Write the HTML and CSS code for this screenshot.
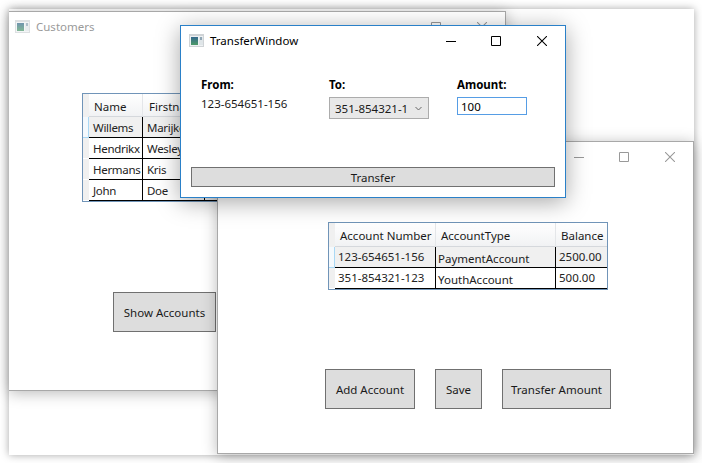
FILE: index.html
```html
<!DOCTYPE html>
<html lang="en">
<head>
  <meta charset="UTF-8" />
  <title>Customers and accounts</title>
  <link rel="stylesheet" href="styles.css">
</head>
<body>
  <svg class="defs" width="0" height="0">
    <defs>
      <linearGradient id="pane" x1="0" y1="0" x2="0" y2="1">
        <stop offset="0" stop-color="#35688c"/>
        <stop offset="1" stop-color="#4c9a68"/>
      </linearGradient>
      <symbol id="app" viewBox="0 0 15 13">
        <rect x="0" y="0" width="15" height="13" fill="#cfd3d6"/>
        <rect x="1" y="2" width="13" height="10" fill="#eef1f3"/>
        <rect x="2" y="3" width="7" height="8" fill="url(#pane)"/>
        <rect x="10" y="3" width="4" height="8" fill="#dfe5e8"/>
        <rect x="11" y="3" width="2" height="3" fill="#8fa5b4"/>
      </symbol>
      <symbol id="min" viewBox="0 0 10 10"><path d="M0 5.5H10" stroke="currentColor" fill="none"/></symbol>
      <symbol id="max" viewBox="0 0 10 10"><path d="M.5.5H9.5V9.5H.5Z" stroke="currentColor" fill="none"/></symbol>
      <symbol id="close" viewBox="0 0 10 10"><path d="M0 0L10 10M10 0L0 10" stroke="currentColor" stroke-width="1.05" fill="none"/></symbol>
    </defs>
  </svg>

  <div class="desktop">
    <div class="win customers">
      <div class="titlebar">
        <svg class="appicon"><use href="#app"/></svg>
        <span class="title">Customers</span>
        <div class="controls">
          <svg><use href="#min"/></svg>
          <svg><use href="#max"/></svg>
          <svg><use href="#close"/></svg>
        </div>
      </div>
      <table class="grid customer-grid">
        <colgroup><col class="c-rh"><col class="c-name"><col class="c-first"><col class="c-last"></colgroup>
        <tr><th class="rh"></th><th>Name</th><th>Firstname</th><th></th></tr>
        <tr class="sel"><th class="rh"></th><td>Willems</td><td>Marijke</td><td></td></tr>
        <tr><th class="rh"></th><td>Hendrikx</td><td>Wesley</td><td></td></tr>
        <tr><th class="rh"></th><td>Hermans</td><td>Kris</td><td></td></tr>
        <tr><th class="rh"></th><td>John</td><td>Doe</td><td></td></tr>
      </table>
      <button class="btn show-btn">Show Accounts</button>
    </div>

    <div class="win accounts">
      <div class="titlebar">
        <div class="controls">
          <svg><use href="#min"/></svg>
          <svg><use href="#max"/></svg>
          <svg><use href="#close"/></svg>
        </div>
      </div>
      <table class="grid account-grid">
        <colgroup><col class="c-rh"><col class="c-num"><col class="c-type"><col class="c-bal"></colgroup>
        <tr><th class="rh"></th><th>Account Number</th><th>AccountType</th><th>Balance</th></tr>
        <tr class="sel"><th class="rh"></th><td class="num">123-654651-156</td><td class="low">PaymentAccount</td><td>2500.00</td></tr>
        <tr><th class="rh"></th><td class="num">351-854321-123</td><td class="low">YouthAccount</td><td>500.00</td></tr>
      </table>
      <div class="actions">
        <button class="btn add-btn">Add Account</button>
        <button class="btn save-btn">Save</button>
        <button class="btn transfer-btn">Transfer Amount</button>
      </div>
    </div>

    <div class="win transfer">
      <div class="titlebar">
        <svg class="appicon"><use href="#app"/></svg>
        <span class="title">TransferWindow</span>
        <div class="controls">
          <svg><use href="#min"/></svg>
          <svg><use href="#max"/></svg>
          <svg><use href="#close"/></svg>
        </div>
      </div>
      <div class="form">
        <div>
          <div class="label">From:</div>
          <div class="from-value">123-654651-156</div>
        </div>
        <div>
          <div class="label">To:</div>
          <div class="combo">
            <span>351-854321-1</span>
            <svg width="7" height="5" viewBox="0 0 7 5"><path d="M.5 1L3.5 4L6.5 1" stroke="#666" fill="none"/></svg>
          </div>
        </div>
        <div>
          <div class="label">Amount:</div>
          <input class="amount" type="text" value="100">
        </div>
      </div>
      <button class="btn wide-btn">Transfer</button>
    </div>
  </div>
</body>
</html>
```

FILE: styles.css
```css
* {
  box-sizing: border-box;
}
body {
  margin: 0;
  width: 702px;
  height: 463px;
  overflow: hidden;
  background-color: #ffffff;
  color: #1a1a1a;
  font-family: "Noto Sans", "Open Sans", sans-serif;
  font-size: 11.5px;
}
.defs {
  position: absolute;
}
.desktop {
  position: absolute;
  left: 9px;
  top: 9px;
  width: 685px;
  height: 446px;
  background-color: #ffffff;
  box-shadow: 0 0 8px rgba(0,0,0,0.35);
}

/* windows sit on a free canvas */
.win {
  position: absolute;
  background-color: #ffffff;
  border: 1px solid #a8a8a8;
  box-shadow: 0 2px 14px rgba(0,0,0,0.28);
}
.customers {
  left: 0;
  top: 2px;
  width: 497px;
  height: 380px;
  border-left: none;
  color: #1a1a1a;
}
.accounts {
  left: 208px;
  top: 132px;
  width: 477px;
  height: 313px;
}
.transfer {
  left: 171px;
  top: 16px;
  width: 386px;
  height: 173px;
  border-color: #2a80c8;
  box-shadow: 0 4px 22px rgba(0,0,0,0.35);
}

.titlebar {
  display: flex;
  align-items: center;
  height: 29px;
  padding: 0 18px 0 8px;
}
.appicon {
  width: 15px;
  height: 13px;
  margin-right: 6px;
}
.customers .titlebar {
  padding-left: 6px;
}
.customers .appicon {
  opacity: 0.7;
}
.title {
  color: #000000;
}
.customers .title {
  color: #9a9a9a;
}
.controls {
  display: flex;
  gap: 35px;
  margin-left: auto;
  color: #000000;
}
.customers .controls,
.accounts .controls {
  color: #999999;
}
.controls svg {
  width: 10px;
  height: 10px;
}
.controls svg:last-child {
  margin-left: 1px;
}

/* data grids */
.grid {
  table-layout: fixed;
  border-collapse: separate;
  border-spacing: 0;
  border: 1px solid #7094b8;
  background-color: #ffffff;
}
.grid th,
.grid td {
  padding: 0;
  font-weight: normal;
  text-align: left;
  white-space: nowrap;
  overflow: hidden;
}
.grid th {
  height: 24px;
  padding: 2px 0 0 5px;
  background: linear-gradient(#ffffff, #f1f2f4);
  border-right: 1px solid #e4e6e9;
  border-bottom: 1px solid #d5d8dc;
}
.grid td {
  height: 21px;
  padding-left: 4px;
  border-right: 1px solid #000000;
  border-bottom: 1px solid #000000;
  color: #222222;
}
.grid td:last-child,
.grid th:last-child {
  border-right: none;
}
.grid th.rh {
  padding: 0;
  height: auto;
  background: #f0f0f0;
  border-right: none;
  border-bottom: 1px solid #ffffff;
}
.grid tr:first-child th.rh {
  background: #f0f0f0;
  border-bottom: none;
}
.grid tr.sel th.rh {
  background: #f4f9fd;
  border-right: 1px solid #a9d8f5;
  border-bottom: 1px solid #a9d8f5;
}
.grid tr.sel td {
  background-color: #f0f0f0;
}
.c-rh { width: 6px; }
.c-name { width: 54px; }
.c-first { width: 62px; }
.c-last { width: 40px; }
.c-num { width: 101px; }
.c-type { width: 120px; }
.c-bal { width: 51px; }

.customer-grid {
  width: 164px;
  margin: 52px 0 0 73px;
}
.customer-grid th {
  height: 23px;
}
.customer-grid th:nth-child(3) {
  padding-left: 6px;
}
.customer-grid td {
  letter-spacing: -0.3px;
}
.account-grid {
  width: 280px;
  margin: 51px 0 0 110px;
}
.account-grid td.num {
  padding: 0 0 2px 3px;
}
.account-grid td.low {
  padding: 2px 0 0 2px;
}
.account-grid td:last-child {
  padding: 0 0 1px 3px;
}
.account-grid th:nth-child(2) {
  padding-left: 5px;
}

/* buttons */
.btn {
  display: block;
  padding: 0;
  font-family: inherit;
  font-size: 11.5px;
  color: #1a1a1a;
  background-color: #dddddd;
  border: 1px solid #707070;
}
.show-btn {
  width: 103px;
  height: 40px;
  margin: 90px 0 0 104px;
}
.actions {
  display: flex;
  gap: 20px;
  margin: 79px 0 0 107px;
}
.actions .btn {
  height: 40px;
}
.add-btn { width: 90px; }
.save-btn { width: 47px; }
.transfer-btn { width: 109px; }
.wide-btn {
  width: 364px;
  height: 20px;
  margin: 24px 0 0 10px;
}

/* transfer form */
.form {
  display: grid;
  grid-template-columns: repeat(3, 128px);
  height: 88px;
  padding: 20px 0 0 20px;
}
.label {
  height: 22px;
  line-height: 20px;
  font-weight: 700;
  color: #000000;
}
.from-value {
  margin-top: -3px;
  line-height: 20px;
}
.combo {
  display: flex;
  align-items: center;
  justify-content: space-between;
  width: 100px;
  height: 22px;
  padding: 0 6px 0 5px;
  background-color: #e8e8e8;
  border: 1px solid #acacac;
}
.amount {
  display: block;
  width: 70px;
  height: 18px;
  padding: 0 3px;
  font-family: inherit;
  font-size: 11.5px;
  color: #000000;
  background-color: #ffffff;
  border: 1px solid #569de5;
  outline: none;
}
```
